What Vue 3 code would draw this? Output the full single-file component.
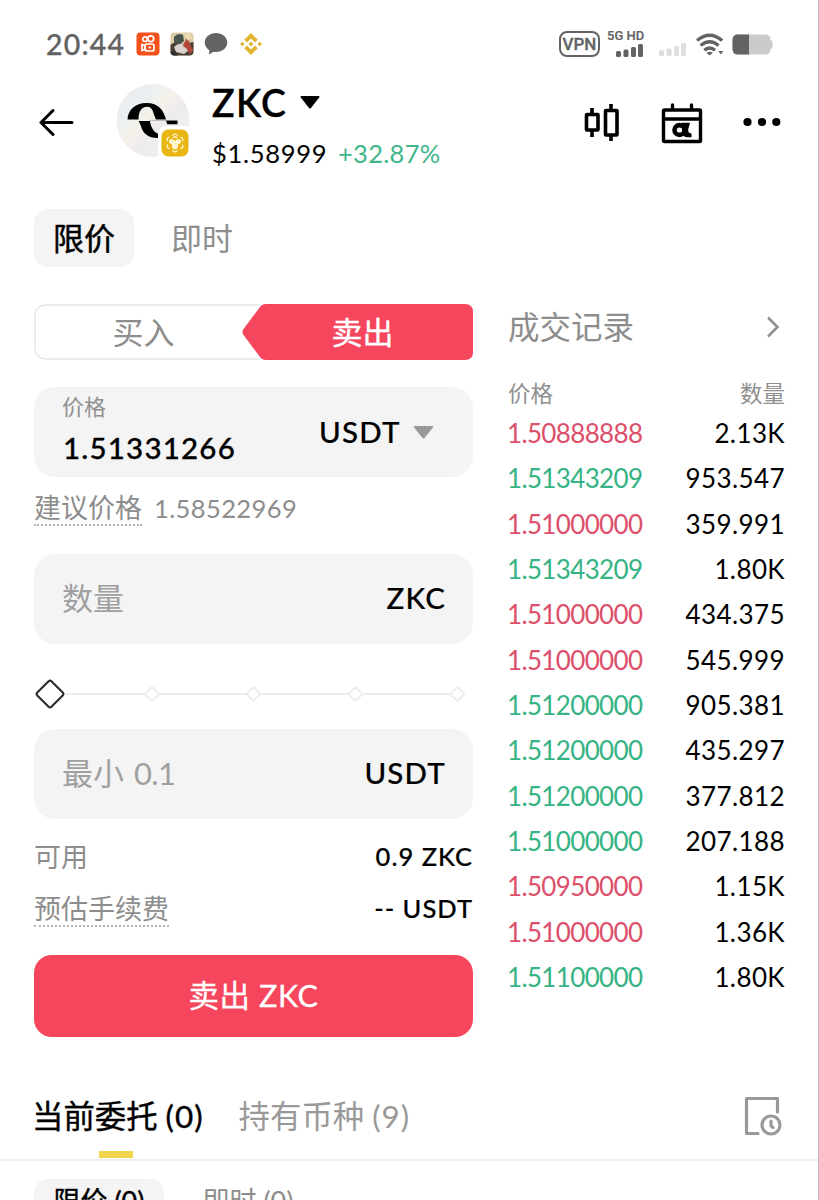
<script setup>
const trades = [
  ['1.50888888', '2.13K', 'down'],
  ['1.51343209', '953.547', 'up'],
  ['1.51000000', '359.991', 'down'],
  ['1.51343209', '1.80K', 'up'],
  ['1.51000000', '434.375', 'down'],
  ['1.51000000', '545.999', 'down'],
  ['1.51200000', '905.381', 'up'],
  ['1.51200000', '435.297', 'up'],
  ['1.51200000', '377.812', 'up'],
  ['1.51000000', '207.188', 'up'],
  ['1.50950000', '1.15K', 'down'],
  ['1.51000000', '1.36K', 'down'],
  ['1.51100000', '1.80K', 'up'],
]
</script>

<template>
  <div class="screen">
    <div class="status">
      <span class="time">20:44</span>
      <svg class="s-kuai" width="24" height="24" viewBox="0 0 24 24">
        <rect x=".5" y=".5" width="23" height="23" rx="4" fill="#f4511b" />
        <g fill="none" stroke="#fff" stroke-width="1.700">
          <circle cx="9" cy="7.200" r="2.300" /><circle cx="14.800" cy="6.800" r="2.900" />
          <rect x="9.200" y="12" width="8.800" height="7" rx="2" />
          <path d="M9 13.800 6 12.600v5.800l3-1.200z" /><path d="M12.500 15.500h2.500" />
        </g>
      </svg>
      <svg class="s-game" width="24" height="24" viewBox="0 0 24 24">
        <defs><clipPath id="gameClip"><rect x=".5" y=".5" width="23" height="23" rx="4" /></clipPath></defs>
        <g clip-path="url(#gameClip)">
          <rect width="24" height="24" fill="#d9cda6" />
          <path d="M0 13 7 9l5 3 12-2v14H0z" fill="#4a4036" />
          <path d="M4 5q4-5 9-2l1 6-5 4-5-3z" fill="#46544d" />
          <path d="M4 15q6-6 12-1l3 4-5 4-8-2z" fill="#d8d3cc" />
          <path d="m16 7 4-2-1 5 4 8-3 4-4-6-3-2z" fill="#b3473c" />
          <path d="m14 3 5-2 3 5-4 3z" fill="#eddcae" />
          <path d="m0 20 5-1 3 5H0z" fill="#2e2c29" />
        </g>
      </svg>
      <svg class="s-chat" width="24" height="24" viewBox="0 0 24 24">
        <path d="M12 1C5.500 1 .7 5.300.7 10.600c0 3.300 1.900 6.100 4.800 7.900L4.900 22.500l4.600-2.700c.8.2 1.600.2 2.500.2 6.500 0 11.300-4.100 11.300-9.400S18.500 1 12 1z" fill="#636363" />
      </svg>
      <svg class="s-bnb" width="22" height="22" viewBox="0 0 22 22" fill="#dfb62d">
        <path d="m11 0 6.800 6.800-2.700 2.700L11 5.400 6.900 9.500 4.200 6.800z" />
        <path d="m11 22 6.800-6.800-2.700-2.700-4.100 4.100-4.100-4.100-2.700 2.700z" />
        <path d="m11 8.500 2.500 2.500-2.500 2.500L8.500 11zM2.300 8.700 4.600 11l-2.300 2.300L0 11zM19.700 8.700 22 11l-2.300 2.300-2.300-2.300z" />
      </svg>
      <span class="vpn">VPN</span>
      <span class="cell">
        <span class="net">5G HD</span>
        <svg width="28" height="13" viewBox="0 0 28 13" fill="#636363">
          <rect x="0" y="7" width="5" height="6" rx="1.500" /><rect x="7.500" y="5.500" width="5" height="7.500" rx="1.500" />
          <rect x="15" y="3" width="5" height="10" rx="1.500" /><rect x="22" y="0" width="5" height="13" rx="1.500" />
        </svg>
      </span>
      <svg class="s-sig" width="28" height="13" viewBox="0 0 28 13" fill="#dedede">
        <rect x="0" y="7" width="5" height="6" rx="1.500" /><rect x="7.500" y="5.500" width="5" height="7.500" rx="1.500" />
        <rect x="15" y="3" width="5" height="10" rx="1.500" /><rect x="22" y="0" width="5" height="13" rx="1.500" />
      </svg>
      <svg class="s-wifi" width="28" height="23" viewBox="0 0 28 23">
        <g fill="none" stroke="#636363" stroke-width="3.300">
          <path d="M1 7.500q12.500-10.500 25.200 0" /><path d="M4.600 12.600q9-7.600 18 0" /><path d="M8.300 17.200q5.400-4.400 10.800 0" />
        </g>
        <path d="M10.500 19.700q3.200-2 6.400 0L13.700 22.500zM22.300 18h5l-2.500 3.600z" fill="#636363" />
      </svg>
      <svg class="s-batt" width="41" height="21" viewBox="0 0 41 21">
        <path d="M6 .5h27q5.500 0 5.500 5.500 2 .5 2 2.500v4q0 2-2 2.500 0 5.500-5.500 5.500H6Q.5 20.500.5 15V6Q.5.500 6 .500z" fill="#cbcbcb" />
        <path d="M17 .5H6Q.5.500.5 6v9q0 5.500 5.500 5.500h11z" fill="#636363" />
      </svg>
    </div>

    <header class="header">
      <svg class="back" width="36" height="30" viewBox="0 0 36 30" fill="none" stroke="#000" stroke-width="3" stroke-linecap="round" stroke-linejoin="round">
        <path d="M33 14.500H2M14 2.500 2 14.500l12 12" />
      </svg>
      <svg class="avatar" width="76" height="76" viewBox="0 0 76 76">
        <defs>
          <linearGradient id="disc" x1="0" y1="0" x2="1" y2="1">
            <stop offset="0" stop-color="#e9e9e8" /><stop offset=".3" stop-color="#ecf0f3" />
            <stop offset=".45" stop-color="#f5f1e8" /><stop offset=".6" stop-color="#eeebf0" />
            <stop offset=".75" stop-color="#f1efeb" /><stop offset="1" stop-color="#f4f4f4" />
          </linearGradient>
        </defs>
        <circle cx="37" cy="36.500" r="36.500" fill="url(#disc)" />
        <path d="M11.500 35.500C12 26 19 19 30.500 19c12 0 17 7 19.500 16.500H40C37 30 37.500 22.800 31 22.800c-5.500 0-8.500 5-8.500 12.700z" />
        <path d="M22.500 37H34c1 6 3 10.500 8 12.800v4.200c-5 0-9-.8-12.500-4-4.500-4-4-9-7-13zM50 36.500h11.500v3.800H51.200z" />
        <path d="M34 36.300h17" stroke="#888" stroke-width=".6" />
        <path d="M51 42h16q9 0 9 9v25H42V51q0-9 9-9z" fill="#fff" />
        <rect x="45.500" y="45.500" width="27" height="27" rx="7" fill="#e9b512" />
        <g fill="none" stroke="#fff5d0" stroke-width="1.300" stroke-linejoin="round">
          <path d="m56.300 51.500 2.700-1.500 2.700 1.500M53.500 53l-2.200 1.300v3M64.500 53l2.200 1.300v3M51.300 60.500v3l2.300 1.400M66.700 60.500v3l-2.300 1.400M56.300 66.500 59 68l2.700-1.500" />
          <path d="m59 57.500 3.500-2 1.800 1v2l-3 1.800v3.400L59 65l-2.300-1.300v-3.400l-3-1.800v-2l1.800-1z" fill="#fff5d0" />
          <path d="m56.500 54 2.500-1.400 2.500 1.400" />
        </g>
      </svg>
      <div class="title">
        <div class="pair">
          <span>ZKC</span>
          <svg width="20" height="13" viewBox="0 0 20 13"><path d="M1.200 0h17.600q1 .5.4 1.500L11 12q-1 1.200-2 0L.8 1.500Q.2.500 1.200 0z" /></svg>
        </div>
        <div class="quote"><span class="usd">$1.58999</span><span class="chg">+32.87%</span></div>
      </div>
      <svg class="i-candle" width="36" height="40" viewBox="0 0 36 40" fill="none" stroke="#000" stroke-width="3.600" stroke-linejoin="round">
        <path d="M8 4v7M8 27v6M27 0v6M27 32v5" stroke-linecap="butt" />
        <rect x="2.500" y="10.500" width="11.500" height="15.500" rx=".5" /><rect x="21.500" y="6.500" width="11.500" height="24.500" rx=".5" />
      </svg>
      <svg class="i-cal" width="42" height="42" viewBox="0 0 42 42">
        <g fill="none" stroke="#000" stroke-width="3.400" stroke-linejoin="round" stroke-linecap="round">
          <rect x="2.500" y="8" width="37" height="31.500" rx="1" /><path d="M3 17h36M11.500 7V3M30.500 7V3" />
        </g>
        <ellipse cx="18.500" cy="28" rx="5" ry="4.900" fill="none" stroke="#000" stroke-width="4.600" />
        <path d="M21 20.800h8l-1.700 6c-.3 3.300.5 4.600 3.200 4.600v3.800h-4.500q-4.500-.5-5-5.500z" />
      </svg>
      <svg class="i-more" width="38" height="10" viewBox="0 0 38 10"><circle cx="4.500" cy="5" r="4.100" /><circle cx="19" cy="5" r="4.100" /><circle cx="33.300" cy="5" r="4.100" /></svg>
    </header>

    <div class="modes"><span class="mode on">限价</span><span class="mode">即时</span></div>

    <main class="trade">
      <section class="form">
        <div class="side">
          <svg class="side-bg" width="439" height="57" viewBox="0 0 439 57">
            <path d="M226 1H13Q1 1 1 13v30q0 12 12 12h213" fill="none" stroke="#ebebeb" stroke-width="1.800" />
            <path d="M232 0h199q8 0 8 8v40q0 8-8 8H232q-4 0-6-3l-16.500-22q-2-3 0-6L226 3q2-3 6-3z" fill="#f6465d" />
          </svg>
          <span class="buy">买入</span><span class="sell">卖出</span>
        </div>
        <div class="box price-box">
          <div class="stack"><span class="label">价格</span><span class="value">1.51331266</span></div>
          <span class="unit">USDT</span>
          <svg width="21" height="13" viewBox="0 0 21 13"><path d="M1.500 0h18q1 .5.4 1.500L11.500 12q-1 1.200-2 0L1.100 1.500Q.5.500 1.500 0z" fill="#999" /></svg>
        </div>
        <div class="hint"><span class="dotted">建议价格</span><span class="sug">1.58522969</span></div>
        <div class="box"><span class="ph">数量</span><span class="unit end">ZKC</span></div>
        <svg class="slider" width="439" height="32" viewBox="0 0 439 32">
          <path d="M32 16h385" stroke="#ebecef" stroke-width="1.800" />
          <g fill="#fff" stroke="#ebecef" stroke-width="2">
            <rect v-for="x in [118, 219.500, 321.500, 423.500]" :key="x" :x="x - 5" y="11" width="10" height="10" rx="2" :transform="`rotate(45 ${x} 16)`" />
          </g>
          <rect x="6" y="6" width="20" height="20" rx="2" transform="rotate(45 16 16)" fill="#fff" stroke="#2b2c30" stroke-width="2.100" />
        </svg>
        <div class="box"><span class="ph">最小 <span class="min">0.1</span></span><span class="unit end">USDT</span></div>
        <div class="info avail"><span>可用</span><b>0.9 ZKC</b></div>
        <div class="info fee"><span class="dotted">预估手续费</span><b>-- USDT</b></div>
        <button class="submit">卖出 ZKC</button>
      </section>

      <section class="tape">
        <div class="tape-title"><span>成交记录</span>
          <svg width="14" height="22" viewBox="0 0 14 22" fill="none" stroke="#909090" stroke-width="2.500"><path d="m2 1.500 9.500 9.500L2 20.500" /></svg>
        </div>
        <div class="tape-head"><span>价格</span><span>数量</span></div>
        <div v-for="(t, i) in trades" :key="i" class="row">
          <span class="p" :class="t[2]">{{ t[0] }}</span><span class="q">{{ t[1] }}</span>
        </div>
      </section>
    </main>

    <nav class="tabs">
      <span class="tab on">当前委托 <span class="count">(0)</span></span>
      <span class="tab">持有币种 <span class="count">(9)</span></span>
      <svg class="history" width="38" height="40" viewBox="0 0 38 40" fill="none" stroke="#999" stroke-width="3.200" stroke-linecap="round" stroke-linejoin="round">
        <path d="M14 37.500H2.500V2.500h31V16" /><circle cx="27" cy="29" r="9" /><path d="M27 25v5l2 1.500" />
      </svg>
    </nav>
    <div class="filters"><span class="chip on">限价 (0)</span><span class="chip">即时 (0)</span></div>
  </div>
</template>

<style>
body { margin: 0; background: #fff; }
</style>

<style scoped>
.screen {
  box-sizing: border-box;
  width: 819px;
  height: 1200px;
  overflow: hidden;
  background: #fff;
  border-right: 1px solid #b9b9b9;
  font-family: Lato, "Noto Sans CJK SC", sans-serif;
  color: #000;
  white-space: nowrap;
}
svg { display: block; flex: none; }
.status { display: flex; align-items: center; height: 84px; padding: 4px 0 0 46px; box-sizing: border-box; color: #636363; }
.time { width: 90px; font: 500 28.500px/40px Lato, sans-serif; letter-spacing: 1.200px; -webkit-text-stroke: .3px; margin-top: -1px; }
.s-game { margin-left: 10px; }
.s-chat { margin-left: 10px; }
.s-bnb { margin-left: 12px; }
.vpn { box-sizing: border-box; width: 41px; height: 26px; margin-left: 297px; border: 2px solid #636363; border-radius: 8px; font: 500 17px/23px Roboto, sans-serif; text-align: center; -webkit-text-stroke: .3px; }
.cell { display: flex; flex-direction: column; margin: -2px 0 0 7px; width: 37px; }
.net { font: 500 13px/13px Roboto, sans-serif; -webkit-text-stroke: .2px; }
.cell svg { margin: 2px 0 0 9px; }
.s-sig { margin: 11px 0 0 15px; }
.s-wifi { margin-left: 9px; }
.s-batt { margin-left: 8px; margin-top: 1px; }

.header { display: flex; height: 125px; padding-left: 39px; }
.back { margin-top: 24px; }
.avatar { margin-left: 41px; }
.title { width: 372px; margin-left: 20px; }
.pair { display: flex; align-items: center; height: 37px; font-size: 37.500px; font-weight: 600; line-height: 37px; letter-spacing: 1.300px; -webkit-text-stroke: .3px; }
.pair svg { margin: -1px 0 0 13px; }
.quote { display: flex; font-size: 25.500px; line-height: 32px; margin-top: 16px; }
.usd { width: 126px; letter-spacing: .7px; }
.chg { color: #40b68a; letter-spacing: .3px; }
.i-candle { margin-top: 20px; }
.i-cal { margin: 18px 0 0 41px; }
.i-more { margin: 33px 0 0 40px; }

.modes { display: flex; height: 95px; padding-left: 34px; }
.mode { width: 100px; height: 58px; border-radius: 14px; text-align: center; font-size: 31px; line-height: 59px; color: #8d8d8d; margin-right: 18px; }
.mode.on { color: #000; background: #f4f4f4; -webkit-text-stroke: .5px; }

.trade { display: grid; grid-template-columns: 439px 277px; column-gap: 35px; padding-left: 34px; height: 762px; }
.side { position: relative; height: 57px; font-size: 31px; line-height: 56px; }
.side-bg { position: absolute; inset: 0; }
.buy, .sell { position: relative; display: inline-block; width: 219px; text-align: center; color: #8d8d8d; }
.sell { color: #fff; -webkit-text-stroke: .4px; }
.box { display: flex; align-items: center; box-sizing: border-box; height: 90px; padding: 0 28px; border-radius: 21px; background: #f4f4f4; }
.price-box { margin-top: 26px; }
.stack { display: flex; flex-direction: column; width: 257px; }
.label { font-size: 22px; line-height: 32px; color: #909090; margin-top: -1px; }
.value { font-size: 29.500px; line-height: 49px; font-weight: 500; letter-spacing: 1.200px; -webkit-text-stroke: .3px; margin-left: 1px; }
.unit { font-size: 29.500px; font-weight: 500; -webkit-text-stroke: .2px; width: 94px; letter-spacing: 1.200px; padding-bottom: 1px; }
.unit.end { width: auto; margin-left: auto; margin-right: -1px; padding-bottom: 3px; }
.hint { display: flex; height: 77px; font-size: 27px; line-height: 38px; color: #8d8d8d; padding-top: 12px; box-sizing: border-box; }
.dotted { height: 35px; border-bottom: 2px dotted #b4b4b4; }
.sug { margin-left: 12px; font-size: 25.500px; letter-spacing: .4px; }
.ph { font-size: 31px; color: #a0a0a0; padding-bottom: 6px; }
.min { margin-left: 2px; letter-spacing: -.6px; }
.slider { margin: 34px 0 19px; }
.info { display: flex; justify-content: space-between; font-size: 27px; line-height: 38px; color: #8d8d8d; }
.info b { color: #000; font-size: 25.500px; font-weight: 500; letter-spacing: 1px; margin-top: -1px; -webkit-text-stroke: .2px; }
.avail { margin-top: 19px; height: 38px; }
.fee { margin-top: 14px; height: 38px; }
.submit { display: block; width: 439px; height: 82px; margin-top: 27px; padding: 0 0 1px; border: 0; border-radius: 18px; background: #f6465d; color: #fff; font-family: inherit; font-size: 30.500px; line-height: 81px; letter-spacing: .6px; -webkit-text-stroke: .3px; }

.tape-title { display: flex; justify-content: space-between; align-items: center; height: 46px; padding-right: 5px; font-size: 31.500px; line-height: 46px; color: #8d8d8d; }
.tape-head { display: flex; justify-content: space-between; height: 39px; margin-top: 22px; font-size: 22.500px; line-height: 44px; color: #909090; }
.row { display: flex; justify-content: space-between; height: 45.330px; line-height: 44.500px; font-size: 26px; }
.p { letter-spacing: -.65px; margin-left: -1px; }
.q { letter-spacing: .4px; }
.up { color: #36b384; }
.down { color: #dc506b; }

.tabs { display: flex; box-sizing: border-box; height: 95px; padding: 0 36px 0 32px; border-bottom: 2px solid #eee; }
.tab { position: relative; margin-right: 35px; font-size: 31.400px; line-height: 101px; color: #999; }
.tab.on { color: #000; -webkit-text-stroke: .4px; }
.count { letter-spacing: 1px; }
.tab.on::after { content: ""; position: absolute; left: 67px; bottom: 1px; width: 34px; height: 7px; background: #f0d44a; }
.history { margin: 30px 0 0 auto; }
.filters { display: flex; padding: 18px 0 0 34px; }
.chip { box-sizing: border-box; width: 130px; height: 54px; border-radius: 14px; text-align: center; font-size: 27px; line-height: 44px; color: #8d8d8d; margin-right: 19px; }
.chip.on { background: #f4f4f4; color: #000; -webkit-text-stroke: .4px; }
</style>
